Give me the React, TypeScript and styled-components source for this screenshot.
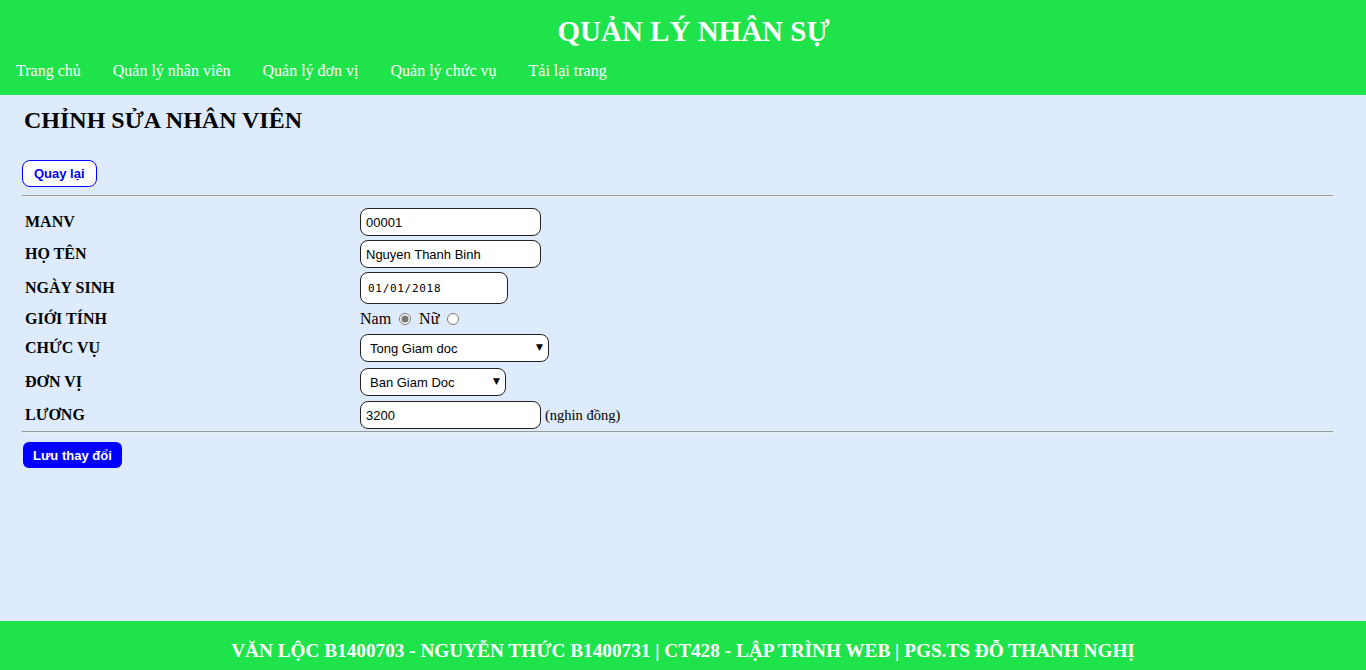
import React from 'react';
import styled, { createGlobalStyle } from 'styled-components';

const GlobalStyle = createGlobalStyle`
  html, body {
    margin: 0;
    padding: 0;
    background: #deebfc;
    font-family: 'Liberation Serif', 'Times New Roman', serif;
  }
  * {
    box-sizing: border-box;
  }
`;

const Page = styled.div`
  min-height: 670px;
  display: flex;
  flex-direction: column;
  background: #deebfc;
`;

const Header = styled.header`
  background: #1ee34b;
  height: 95px;
  color: #fff;
  display: flex;
  flex-direction: column;
`;

const SiteTitle = styled.h1`
  margin: 0;
  padding: 14px 0 0 21px;
  text-align: center;
  font-size: 29px;
  font-weight: bold;
  line-height: 34px;
`;

const Nav = styled.nav`
  display: flex;
  margin-top: 13px;
`;

const NavLink = styled.a`
  color: #fff;
  text-decoration: none;
  font-size: 16px;
  line-height: 20px;
  padding: 0 16px;
`;

const Main = styled.main`
  flex: 1;
  padding: 0 33px 0 22px;
`;

const PageTitle = styled.h2`
  margin: 0;
  padding: 9px 0 0 2px;
  font-size: 24px;
  font-weight: bold;
  line-height: 32px;
  color: #000;
`;

const BackButton = styled.button`
  margin-top: 24px;
  height: 27px;
  padding: 0 11px;
  background: #fff;
  border: 1px solid #0000ff;
  border-radius: 8px;
  color: #0000ff;
  font-family: 'Liberation Sans', Arial, sans-serif;
  font-size: 13px;
  font-weight: bold;
  display: block;
`;

const Rule = styled.hr<{ $top: number }>`
  margin: ${({ $top }) => $top}px 0 0;
  border: 0;
  border-top: 1px solid #9a9a9a;
  border-bottom: 1px solid #eeeeee;
  height: 0;
`;

const Form = styled.div`
  display: grid;
  grid-template-columns: 338px 1fr;
  grid-template-rows: 32px 32px 36px 26px 32px 36px 30px;
  align-items: center;
  padding-top: 9px;
`;

const Label = styled.div`
  padding-left: 3px;
  font-size: 16px;
  font-weight: bold;
  color: #000;
`;

const Cell = styled.div`
  display: flex;
  align-items: center;
  font-size: 16px;
  color: #000;
`;

const TextInput = styled.input<{ $w: number; $h?: number }>`
  width: ${({ $w }) => $w}px;
  height: ${({ $h }) => $h ?? 28}px;
  border: 1px solid #222;
  border-radius: 8px;
  background: #fff;
  padding: 0 5px;
  font-family: 'Liberation Sans', Arial, sans-serif;
  font-size: 13px;
  color: #000;
  outline: none;
`;

const DateInput = styled(TextInput)`
  font-family: 'DejaVu Sans Mono', monospace;
  font-size: 11px;
  letter-spacing: 0.7px;
  padding-left: 7px;
`;

const Radio = styled.input`
  margin: 0 8px 0 8px;
  width: 12px;
  height: 12px;
  accent-color: #777;
`;

const SelectBox = styled.div<{ $w: number }>`
  position: relative;
  width: ${({ $w }) => $w}px;
  height: 28px;

  &::after {
    content: '▼';
    position: absolute;
    right: 6px;
    top: 8px;
    font-size: 9px;
    color: #000;
    pointer-events: none;
    font-family: 'DejaVu Sans', sans-serif;
  }
`;

const Select = styled.select`
  appearance: none;
  width: 100%;
  height: 100%;
  border: 1px solid #222;
  border-radius: 8px;
  background: #fff;
  padding: 0 9px;
  font-family: 'Liberation Sans', Arial, sans-serif;
  font-size: 13px;
  color: #000;
  outline: none;
`;

const Unit = styled.span`
  margin-left: 4px;
  font-size: 14.5px;
`;

const SaveButton = styled.button`
  margin: 9px 0 0 1px;
  height: 26px;
  padding: 0 10px;
  background: #0000ff;
  border: 0;
  border-radius: 6px;
  color: #fff;
  font-family: 'Liberation Sans', Arial, sans-serif;
  font-size: 13px;
  font-weight: bold;
  display: block;
`;

const Footer = styled.footer`
  background: #1ee34b;
  height: 49px;
  display: flex;
  align-items: center;
  justify-content: center;
  color: #fff;
  font-size: 19.25px;
  font-weight: bold;
  padding-top: 11px;
`;

const navItems = ['Trang chủ', 'Quản lý nhân viên', 'Quản lý đơn vị', 'Quản lý chức vụ', 'Tải lại trang'];

const App: React.FC = () => {
  return (
    <Page>
      <GlobalStyle />
      <Header>
        <SiteTitle>QUẢN LÝ NHÂN SỰ</SiteTitle>
        <Nav>
          {navItems.map((item) => (
            <NavLink key={item} href="#">
              {item}
            </NavLink>
          ))}
        </Nav>
      </Header>

      <Main>
        <PageTitle>CHỈNH SỬA NHÂN VIÊN</PageTitle>
        <BackButton>Quay lại</BackButton>
        <Rule $top={8} />

        <Form>
          <Label>MANV</Label>
          <Cell>
            <TextInput $w={181} defaultValue="00001" />
          </Cell>

          <Label>HỌ TÊN</Label>
          <Cell>
            <TextInput $w={181} defaultValue="Nguyen Thanh Binh" />
          </Cell>

          <Label>NGÀY SINH</Label>
          <Cell>
            <DateInput $w={148} $h={32} defaultValue="01/01/2018" />
          </Cell>

          <Label>GIỚI TÍNH</Label>
          <Cell>
            Nam
            <Radio type="radio" name="gt" defaultChecked />
            Nữ
            <Radio type="radio" name="gt" />
          </Cell>

          <Label>CHỨC VỤ</Label>
          <Cell>
            <SelectBox $w={189}>
              <Select defaultValue="tgd">
                <option value="tgd">Tong Giam doc</option>
              </Select>
            </SelectBox>
          </Cell>

          <Label>ĐƠN VỊ</Label>
          <Cell>
            <SelectBox $w={146}>
              <Select defaultValue="bgd">
                <option value="bgd">Ban Giam Doc</option>
              </Select>
            </SelectBox>
          </Cell>

          <Label>LƯƠNG</Label>
          <Cell>
            <TextInput $w={181} defaultValue="3200" />
            <Unit>(nghin đồng)</Unit>
          </Cell>
        </Form>

        <Rule $top={1} />
        <SaveButton>Lưu thay đổi</SaveButton>
      </Main>

      <Footer>VĂN LỘC B1400703 - NGUYỄN THỨC B1400731 | CT428 - LẬP TRÌNH WEB | PGS.TS ĐỖ THANH NGHỊ</Footer>
    </Page>
  );
};

export default App;
